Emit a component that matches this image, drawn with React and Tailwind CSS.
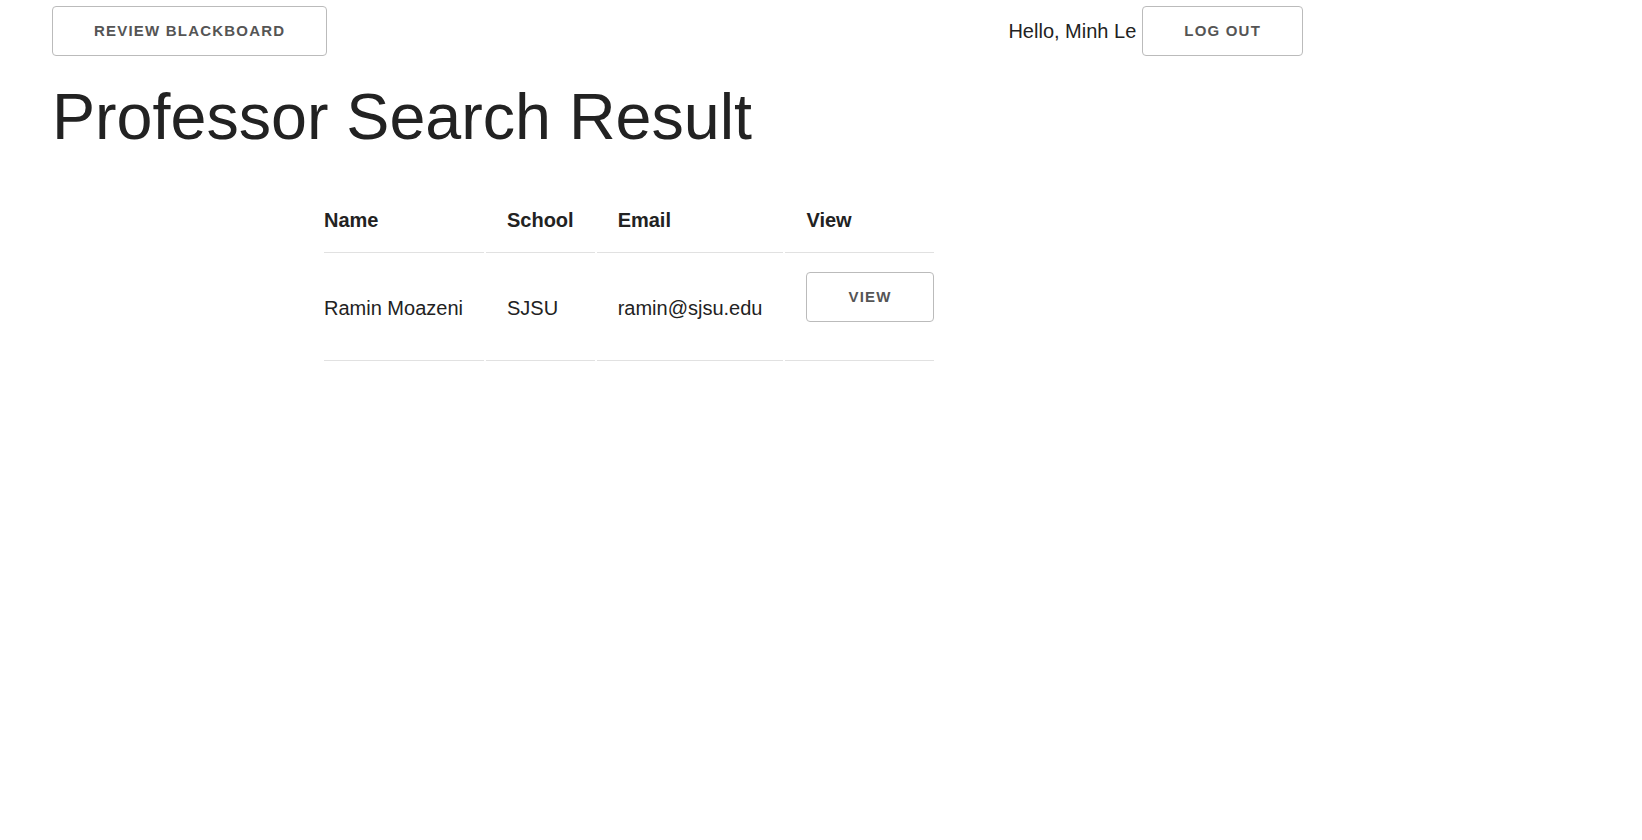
import React from 'react';

const btn =
  'h-[50px] px-[41px] border border-[#bbbbbb] rounded-[4px] bg-transparent text-[#555555] text-[15px] font-bold uppercase tracking-[1.2px] whitespace-nowrap';

const professors = [{ name: 'Ramin Moazeni', school: 'SJSU', email: 'ramin@sjsu.edu' }];

const App = () => {
  return (
    <div className="min-h-screen bg-white text-[#222222] px-[52px] pt-[6px]" style={{ fontFamily: '"Liberation Sans", Arial, sans-serif' }}>
      <div className="flex items-center justify-between w-[1251px]">
        <button type="button" className={btn}>
          Review Blackboard
        </button>
        <div className="flex items-center gap-[6px]">
          <span className="text-[20px]">Hello, Minh Le</span>
          <button type="button" className={btn}>
            Log out
          </button>
        </div>
      </div>

      <h1 className="mt-[22px] text-[64.6px] leading-[78px] font-normal">Professor Search Result</h1>

      <table className="mt-[30px] ml-[270px] border-separate border-spacing-[2px] text-[20px] leading-[30px]">
        <thead>
          <tr>
            <th className="text-left font-bold py-[17px] pl-0 pr-[21px] border-b border-[#e1e1e1]">Name</th>
            <th className="text-left font-bold py-[17px] px-[21px] border-b border-[#e1e1e1]">School</th>
            <th className="text-left font-bold py-[17px] px-[21px] border-b border-[#e1e1e1]">Email</th>
            <th className="text-left font-bold py-[17px] pl-[21px] pr-0 border-b border-[#e1e1e1]">View</th>
          </tr>
        </thead>
        <tbody>
          {professors.map((p) => (
            <tr key={p.email}>
              <td className="align-middle py-[17px] pl-0 pr-[21px] border-b border-[#e1e1e1]">{p.name}</td>
              <td className="align-middle py-[17px] px-[21px] border-b border-[#e1e1e1]">{p.school}</td>
              <td className="align-middle py-[17px] px-[21px] border-b border-[#e1e1e1]">{p.email}</td>
              <td className="align-middle py-[17px] pl-[21px] pr-0 border-b border-[#e1e1e1]">
                <button type="button" className={`${btn} block mb-[21px]`}>
                  View
                </button>
              </td>
            </tr>
          ))}
        </tbody>
      </table>
    </div>
  );
};

export default App;
